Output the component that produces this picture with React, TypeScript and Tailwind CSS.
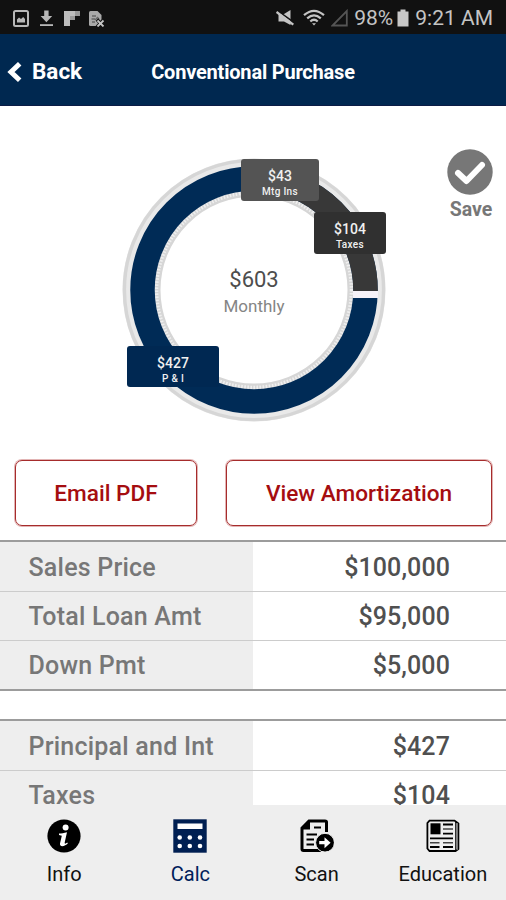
import type { ReactNode } from 'react';
import clsx from 'clsx';

const loanRows = [
    { label: 'Sales Price', value: '$100,000' },
    { label: 'Total Loan Amt', value: '$95,000' },
    { label: 'Down Pmt', value: '$5,000' },
];

const paymentRows = [
    { label: 'Principal and Int', value: '$427' },
    { label: 'Taxes', value: '$104' },
];

function StatusBar() {
    return (
        <div className="flex h-[34px] shrink-0 items-center justify-between bg-[#111111] pt-[2px] pr-[13px] pl-[13px] text-[#c4c4c4]">
            <div className="flex items-center gap-[10px]">
                <svg className="h-[17px] w-[16px]" viewBox="0 0 16 17" fill="none">
                    <rect x="1" y="1" width="14" height="15" rx="1.5" stroke="#b8b8b8" strokeWidth="2" />
                    <path d="M4 12.5V9.5L6 7.5 8 9 10.2 7 12 9V12.5Z" fill="#b8b8b8" />
                </svg>
                <svg className="h-[17px] w-[15px]" viewBox="0 0 15 17" fill="#b8b8b8">
                    <path d="M5.2 0.5H9.6V6H13.2L7.4 12.2 1.6 6H5.2Z" />
                    <rect x="1" y="14.2" width="13" height="1.8" />
                </svg>
                <svg className="h-[17px] w-[16px]" viewBox="0 0 16 17">
                    <path d="M0 1H16V6H11V10H6V16H0Z" fill="#999999" />
                    <path d="M0 1H6V16H0ZM6 1H11V6H6Z" fill="#bdbdbd" />
                </svg>
                <svg className="-ml-[2px] h-[17px] w-[17px]" viewBox="0 0 17 17">
                    <path d="M1 2.5Q1 1 2.5 1H9.5L13.5 5V16H2.5Q1 16 1 14.5Z" fill="#a9a9a9" />
                    <path d="M4 6H8M3.5 9H7M4 12H7M9 7L11 9M7 10L9 8" stroke="#666666" strokeWidth="1.3" />
                    <path d="M9 9.5L16 17M16 9.5L9 17" stroke="#111111" strokeWidth="3.4" />
                    <path d="M9.5 10.5L15.5 16.5M15.5 10.5L9.5 16.5" stroke="#c4c4c4" strokeWidth="1.8" />
                </svg>
            </div>
            <div className="flex items-center">
                <svg className="mr-[9px] h-[18px] w-[18px]" viewBox="0 0 18 18" fill="#c4c4c4">
                    <path d="M2.5 5H8L14.5 1V16L8 12.5H2.5Z" />
                    <path d="M1.5 1.6L18 13.6" stroke="#111111" strokeWidth="1.6" />
                    <path d="M0.5 3L17.3 15.6" stroke="#c4c4c4" strokeWidth="2.4" />
                </svg>
                <svg className="mr-[6px] h-[18px] w-[22px]" viewBox="0 0 22 18" fill="none" stroke="#c4c4c4" strokeWidth="2.2">
                    <path d="M1 6.2Q11 -2.6 21 6.2" />
                    <path d="M4.2 9.4Q11 3.2 17.8 9.4" />
                    <path d="M7.3 12.5Q11 9 14.7 12.5" />
                    <path d="M9 14.2H13L11 16.6Z" fill="#c4c4c4" stroke="none" />
                </svg>
                <svg className="mr-[6px] h-[18px] w-[17px]" viewBox="0 0 17 18" fill="none">
                    <path d="M1.5 16.5H15.8V2Z" stroke="#555555" strokeWidth="1.8" />
                </svg>
                <span className="w-[40px] text-[21px] leading-none whitespace-nowrap">98%</span>
                <svg className="mr-[6px] ml-[3px] h-[18px] w-[12px]" viewBox="0 0 12 18" fill="#c8c8c8">
                    <path d="M3.5 0.5H8.5V2.5H11.5V17.5H0.5V2.5H3.5Z" />
                </svg>
                <span className="text-[21px] leading-none whitespace-nowrap">9:21 AM</span>
            </div>
        </div>
    );
}

function Header() {
    return (
        <div className="grid h-[72px] shrink-0 grid-cols-[1fr_204px_1fr] items-center border-b border-[#0c1c45] bg-[#002850] text-white">
            <button type="button" className="flex items-center gap-[10px] pt-[4px] pl-[7px]">
                <svg className="h-[20px] w-[15px]" viewBox="0 0 15 20" fill="none">
                    <path d="M12.7 1.8L4 10L12.7 18.2" stroke="white" strokeWidth="5" />
                </svg>
                <span className="text-[22.5px] leading-none font-bold">Back</span>
            </button>
            <h1 className="pt-[4px] text-center text-[20px] leading-none font-bold tracking-[-0.2px] whitespace-nowrap">
                Conventional Purchase
            </h1>
        </div>
    );
}

function ChartTag({ amount, label, className }: { amount: string; label: string; className: string }) {
    return (
        <div className={clsx('absolute flex flex-col items-center rounded-[3px] text-[#f0f0f0]', className)}>
            <span className="text-[14px] leading-[15px] font-medium">{amount}</span>
            <span className="text-[10px] leading-[15px] font-medium tracking-[0.3px]">{label}</span>
        </div>
    );
}

function PaymentChart() {
    return (
        <div className="relative flex h-[264px] w-[264px] items-center justify-center">
            <svg className="absolute inset-0" width="264" height="264" viewBox="0 0 264 264" fill="none">
                <circle cx="132" cy="132" r="127.5" stroke="#e9e9e9" strokeWidth="8" />
                <circle cx="132" cy="132" r="129.6" stroke="#d6d6d6" strokeWidth="3.4" />
                <circle cx="132" cy="132" r="96.5" stroke="#d6d6d6" strokeWidth="6" />
                <circle cx="132" cy="132" r="97.5" stroke="#efefef" strokeWidth="3.6" strokeDasharray="1.6 1.5" />
                <circle cx="132" cy="132" r="111.5" stroke="#002b56" strokeWidth="24.5" />
                <path d="M132 20.5A111.5 111.5 0 0 1 243.5 132V133" stroke="#383838" strokeWidth="24.5" />
                <path d="M231 136.5H256" stroke="#f6f2f8" strokeWidth="7" />
            </svg>
            <div className="relative flex flex-col items-center pt-[5px]">
                <span className="text-[22px] leading-[26px] text-[#4d4d4d]">$603</span>
                <span className="text-[17px] leading-[26px] text-[#858585]">Monthly</span>
            </div>
            <ChartTag amount="$43" label="Mtg Ins" className="top-[1px] left-[119px] h-[42px] w-[78px] bg-[#545454] pt-[10px]" />
            <ChartTag amount="$104" label="Taxes" className="top-[54px] left-[192px] h-[42px] w-[72px] bg-[#303030] pt-[10px]" />
            <ChartTag amount="$427" label="P & I" className="top-[188px] left-[5px] h-[41px] w-[92px] bg-[#002852] pt-[10px]" />
        </div>
    );
}

function SaveButton() {
    return (
        <button type="button" className="flex flex-col items-center text-[#777777]">
            <svg className="h-[46px] w-[46px]" viewBox="0 0 46 46" fill="none">
                <circle cx="23" cy="23" r="22.7" fill="#777777" />
                <path d="M11 24L19.5 32L35 16" stroke="white" strokeWidth="6" strokeLinecap="round" strokeLinejoin="round" />
            </svg>
            <span className="mt-[5px] ml-[2px] text-[19.5px] leading-[20px] font-bold">Save</span>
        </button>
    );
}

function OutlineButton({ children, className }: { children: ReactNode; className: string }) {
    return (
        <button
            type="button"
            className={clsx(
                'h-[66px] rounded-[7px] border border-[#a62c2c] pt-[2px] text-[22.6px] font-medium whitespace-nowrap text-[#a50d10] shadow-[0_0_0_1px_#e2b4b4]',
                className
            )}
        >
            {children}
        </button>
    );
}

function AmountTable({ rows, className }: { rows: { label: string; value: string }[]; className?: string }) {
    return (
        <div className={clsx('shrink-0 border-y-2 border-[#9c9c9c] text-[25px] font-medium', className)}>
            {rows.map((row, i) => (
                <div key={row.label} className={clsx('grid h-[49px] grid-cols-2', i > 0 && 'border-t border-[#cccccc]')}>
                    <div className="flex items-center bg-[#eeeeee] pt-[2px] pl-[28.5px] tracking-[0.22px] text-[#777777]">{row.label}</div>
                    <div className="flex items-center justify-end pt-[2px] pr-[56px] tracking-[0.1px] text-[#505050]">{row.value}</div>
                </div>
            ))}
        </div>
    );
}

function InfoIcon() {
    return (
        <svg className="h-[34px] w-[34px]" viewBox="0 0 34 34">
            <circle cx="17" cy="17" r="16.6" fill="black" />
            <circle cx="18.6" cy="8.6" r="3" fill="white" />
            <path d="M12 14.5C14.5 14.5 17 14 20 13.2L17.7 23.5C17.4 25 18.3 25 20.3 23.6L20.8 24.6C18.5 27.2 12.4 28.8 13 24.6L14.8 16.7L12 16Z" fill="white" />
        </svg>
    );
}

function CalcIcon() {
    return (
        <svg className="h-[34px] w-[34px]" viewBox="0 0 34 34">
            <rect x="0.3" y="0.3" width="33.4" height="33.4" fill="#001f52" />
            <rect x="4.5" y="4.5" width="25" height="5.5" fill="white" />
            {[18.5, 27].map(cy =>
                [6.7, 16.8, 27].map(cx => <circle key={`${cx}-${cy}`} cx={cx} cy={cy} r="2.3" fill="white" />)
            )}
        </svg>
    );
}

function ScanIcon() {
    return (
        <svg className="h-[34px] w-[34px]" viewBox="0 0 34 34" fill="none">
            <path d="M26.5 13V3Q26.5 2 25 2H9L2 9V30Q2 31.5 3.5 31.5H21" stroke="black" strokeWidth="3" />
            <path d="M10 1V10.5H1Z" fill="black" />
            <path d="M14 8.5H21M6.5 15.5H17M6.5 20.5H14M6.5 25.5H14" stroke="black" strokeWidth="2" />
            <circle cx="25" cy="23.7" r="9.4" fill="black" stroke="#eeeeee" strokeWidth="1" />
            <path d="M19.2 22.1H24.5V18.2L30.6 23.7L24.5 29.2V25.3H19.2Z" fill="white" />
        </svg>
    );
}

function EducationIcon() {
    return (
        <svg className="h-[34px] w-[34px]" viewBox="0 0 34 34" fill="none">
            <path d="M3.5 1.6H28.5L32.4 4.5V30L29.5 32H3.5L1.4 29.5V4Z" stroke="black" strokeWidth="1.8" />
            <path d="M29.8 2.5V31.5" stroke="black" strokeWidth="1.2" />
            <path d="M31.2 4V31" stroke="#777777" strokeWidth="1.4" />
            <rect x="4.5" y="4.3" width="10" height="11" fill="black" />
            <path d="M17 5.5H27M17 14.7H27M4 19.3H27M17 28H27M4 28H13.5" stroke="black" strokeWidth="1.8" />
            <path d="M17 10H27M4 23.7H13.5M17 23.7H27" stroke="#444444" strokeWidth="1.6" />
        </svg>
    );
}

const tabs = [
    { label: 'Info', icon: <InfoIcon /> },
    { label: 'Calc', icon: <CalcIcon />, active: true },
    { label: 'Scan', icon: <ScanIcon /> },
    { label: 'Education', icon: <EducationIcon /> },
];

function TabBar() {
    return (
        <nav className="grid h-[95px] shrink-0 grid-cols-4 bg-[#eeeeee] pl-[1px]">
            {tabs.map(tab => (
                <button
                    key={tab.label}
                    type="button"
                    className={clsx('flex flex-col items-center pt-[14px]', tab.active ? 'text-[#00205a]' : 'text-[#111111]')}
                >
                    {tab.icon}
                    <span className="mt-[9px] text-[20px] leading-[24px]">{tab.label}</span>
                </button>
            ))}
        </nav>
    );
}

export default function App() {
    return (
        <div className="flex h-[900px] w-[506px] flex-col overflow-hidden bg-white font-[Roboto,'Liberation_Sans',sans-serif]">
            <StatusBar />
            <Header />
            <main className="flex min-h-0 flex-1 flex-col overflow-hidden">
                <div className="grid h-[354px] shrink-0 grid-cols-[122px_264px_1fr] pr-[13px]">
                    <div className="col-start-2 pt-[52px]">
                        <PaymentChart />
                    </div>
                    <div className="flex items-start justify-end pt-[43px]">
                        <SaveButton />
                    </div>
                </div>
                <div className="flex shrink-0 justify-between pr-[14px] pl-[15px]">
                    <OutlineButton className="w-[182px]">Email PDF</OutlineButton>
                    <OutlineButton className="w-[266px]">View Amortization</OutlineButton>
                </div>
                <AmountTable rows={loanRows} className="mt-[14px]" />
                <AmountTable rows={paymentRows} className="mt-[28px]" />
            </main>
            <TabBar />
        </div>
    );
}
